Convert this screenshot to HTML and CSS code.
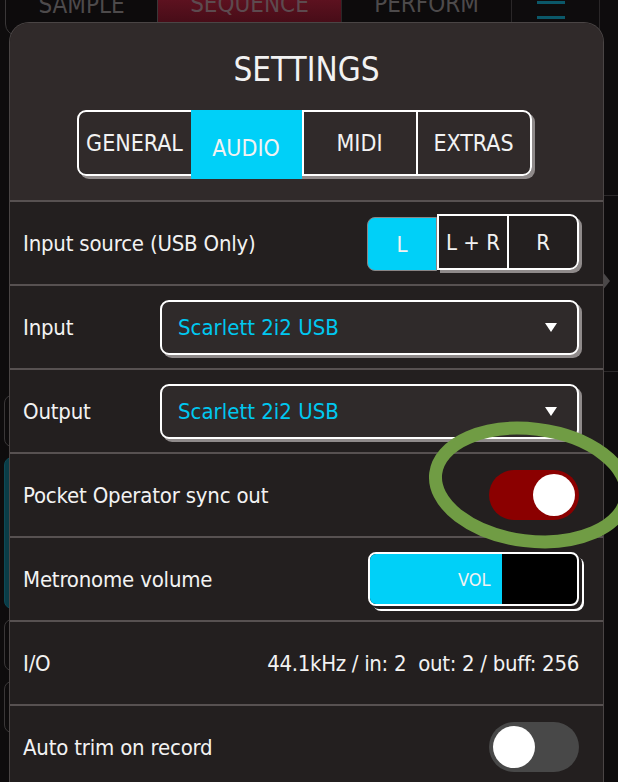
FILE: index.html
```html
<!DOCTYPE html>
<html lang="en">
<head>
  <meta charset="UTF-8">
  <meta name="viewport" content="width=device-width, initial-scale=1.0">
  <title>Settings</title>
  <link rel="stylesheet" href="styles.css">
</head>
<body>
  <div class="topnav">
    <div class="nav-tab nav-first">SAMPLE</div>
    <div class="nav-tab nav-active">SEQUENCE</div>
    <div class="nav-tab">PERFORM</div>
    <div class="nav-menu"><span></span><span></span></div>
  </div>

  <div class="side-left">
    <div class="side-box"></div>
    <div class="side-box side-teal"></div>
    <div class="side-box"></div>
    <div class="side-box"></div>
  </div>
  <div class="side-right">
    <div class="side-line"></div>
    <div class="side-arrow"></div>
    <div class="side-line"></div>
  </div>

  <div class="dialog">
    <div class="dialog-head">
      <h1 class="title">SETTINGS</h1>
      <div class="tabs">
        <div class="tab tab-first">GENERAL</div>
        <div class="tab active">AUDIO</div>
        <div class="tab">MIDI</div>
        <div class="tab tab-last">EXTRAS</div>
      </div>
    </div>

    <div class="row">
      <span class="label">Input source (USB Only)</span>
      <div class="segs">
        <div class="seg active">L</div>
        <div class="seg-group">
          <div class="seg">L + R</div>
          <div class="seg">R</div>
        </div>
      </div>
    </div>

    <div class="row">
      <span class="label">Input</span>
      <div class="select">
        <span>Scarlett 2i2 USB</span>
        <span class="caret"></span>
      </div>
    </div>

    <div class="row">
      <span class="label">Output</span>
      <div class="select">
        <span>Scarlett 2i2 USB</span>
        <span class="caret"></span>
      </div>
    </div>

    <div class="row">
      <span class="label">Pocket Operator sync out</span>
      <div class="toggle on"><span class="knob"></span></div>
    </div>

    <div class="row">
      <span class="label">Metronome volume</span>
      <div class="slider">
        <div class="slider-fill" style="width: 64%">VOL</div>
      </div>
    </div>

    <div class="row">
      <span class="label">I/O</span>
      <span class="info">44.1kHz / in: 2&nbsp; out: 2 / buff: 256</span>
    </div>

    <div class="row">
      <span class="label">Auto trim on record</span>
      <div class="toggle"><span class="knob"></span></div>
    </div>
  </div>

  <svg class="highlight" width="618" height="782" viewBox="0 0 618 782">
    <ellipse cx="531" cy="485" rx="96" ry="56" transform="rotate(7 531 485)" fill="none" stroke="#709c44" stroke-width="13"/>
  </svg>
</body>
</html>
```

FILE: styles.css
```css
body {
  margin: 0;
  width: 618px;
  height: 782px;
  overflow: hidden;
  position: relative;
  background-color: #0e0c0d;
  font-family: "DejaVu Sans Condensed", "Liberation Sans", sans-serif;
  color: #f2f2f2;
}

/* app behind the dialog */
.topnav {
  display: flex;
  height: 50px;
  margin-top: -14px;
  padding-left: 5px;
}
.nav-tab {
  display: flex;
  justify-content: center;
  align-items: flex-start;
  padding-top: 4px;
  box-sizing: border-box;
  color: #4d4a4b;
  font-size: 24px;
  width: 154px;
  border-right: 1px solid #2a2728;
  background-color: #0d0b0c;
}
.nav-first {
  border: 1px solid #3a3738;
  border-radius: 0 0 0 12px;
  width: 153px;
}
.nav-active {
  width: 184px;
  color: #5d4a4f;
  background: linear-gradient(#6a1424, #3a0a13);
}
.nav-tab:nth-child(3) {
  width: 170px;
}
.nav-menu {
  width: 88px;
  border-right: 1px solid #2a2728;
  display: flex;
  flex-direction: column;
  gap: 12px;
  padding: 15px 0 0 25px;
  box-sizing: border-box;
}
.nav-menu span {
  display: block;
  width: 28px;
  height: 3px;
  background-color: #0b5869;
}

.side-left {
  position: absolute;
  left: 0;
  top: 395px;
  display: flex;
  flex-direction: column;
  gap: 10px;
}
.side-box {
  width: 14px;
  height: 50px;
  border: 1px solid #3a3738;
  border-radius: 8px;
  margin-left: 4px;
}
.side-teal {
  height: 150px;
  background-color: #0a3c47;
  border-color: #0d4a57;
}
.side-right {
  position: absolute;
  left: 602px;
  top: 195px;
  width: 16px;
}
.side-line {
  height: 1px;
  background-color: #2c292a;
}
.side-arrow {
  width: 0;
  height: 0;
  margin: 75px 0 80px 0;
  border-left: 8px solid #4a4748;
  border-top: 10px solid transparent;
  border-bottom: 10px solid transparent;
}

/* settings dialog */
.dialog {
  position: absolute;
  left: 9px;
  top: 22px;
  width: 593px;
  border: 1px solid #4a4545;
  border-bottom: none;
  border-radius: 20px 20px 0 0;
  background-color: #231f1f;
  overflow: hidden;
}
.dialog-head {
  background-color: #302a2a;
  height: 177px;
  display: flex;
  flex-direction: column;
  align-items: center;
}
.title {
  margin: 28px 0 0 0;
  font-weight: normal;
  font-size: 33px;
  line-height: 38px;
}
.tabs {
  display: flex;
  margin-top: 21px;
  margin-right: 5px;
  border: 2px solid #ffffff;
  border-radius: 9px;
  box-shadow: 3px 3px 0 #8f8a8a;
  height: 62px;
}
.tab {
  display: flex;
  justify-content: center;
  align-items: center;
  width: 112px;
  font-size: 23px;
  border-left: 2px solid #ffffff;
}
.tab-first {
  border-left: none;
}
.tab.active {
  background-color: #00d0f8;
  border-left: none;
  margin: -2px 0 -5px 0;
  padding-top: 6px;
  width: 111px;
}
.tab.active + .tab {
  border-left: 2px solid #ffffff;
}

.row {
  display: flex;
  justify-content: space-between;
  align-items: center;
  height: 82px;
  padding: 0 24px 0 13px;
  border-top: 2px solid #575151;
}
.label {
  font-size: 22px;
  letter-spacing: -0.2px;
}

.segs {
  display: flex;
  align-items: flex-start;
  height: 58px;
}
.seg {
  display: flex;
  justify-content: center;
  align-items: center;
  width: 68px;
  font-size: 22px;
}
.seg.active {
  background-color: #00d0f8;
  border: 1px solid #8a8585;
  border-radius: 8px 0 0 8px;
  height: 52px;
  margin-top: 3px;
}
.seg-group {
  display: flex;
  height: 52px;
  border: 2px solid #ffffff;
  border-radius: 0 9px 9px 0;
  box-shadow: 3px 3px 0 #8f8a8a;
}
.seg-group .seg + .seg {
  border-left: 2px solid #ffffff;
}

.select {
  display: flex;
  justify-content: space-between;
  align-items: center;
  box-sizing: border-box;
  width: 419px;
  height: 55px;
  padding: 0 20px 0 16px;
  background-color: #2f2a2a;
  border: 2px solid #ffffff;
  border-radius: 9px;
  box-shadow: 3px 3px 0 #8f8a8a;
  color: #00c8f0;
  font-size: 22px;
}
.caret {
  width: 0;
  height: 0;
  border-left: 6px solid transparent;
  border-right: 6px solid transparent;
  border-top: 9px solid #ffffff;
}

.toggle {
  width: 90px;
  height: 50px;
  border-radius: 25px;
  background-color: #484848;
  display: flex;
  align-items: center;
  padding: 0 4px;
  box-sizing: border-box;
}
.toggle.on {
  background-color: #8b0000;
  justify-content: flex-end;
}
.knob {
  width: 42px;
  height: 42px;
  border-radius: 50%;
  background-color: #ffffff;
}

.slider {
  display: flex;
  width: 207px;
  height: 50px;
  background-color: #000000;
  border: 2px solid #ffffff;
  border-radius: 8px;
  box-shadow: 3px 3px 0 #231f1f, 5px 5px 0 #ffffff;
  overflow: hidden;
}
.slider-fill {
  display: flex;
  justify-content: flex-end;
  align-items: center;
  padding-right: 12px;
  box-sizing: border-box;
  background-color: #00d0f8;
  font-size: 18px;
}

.info {
  font-size: 22px;
  letter-spacing: -0.3px;
}

.highlight {
  position: absolute;
  left: 0;
  top: 0;
}
```
